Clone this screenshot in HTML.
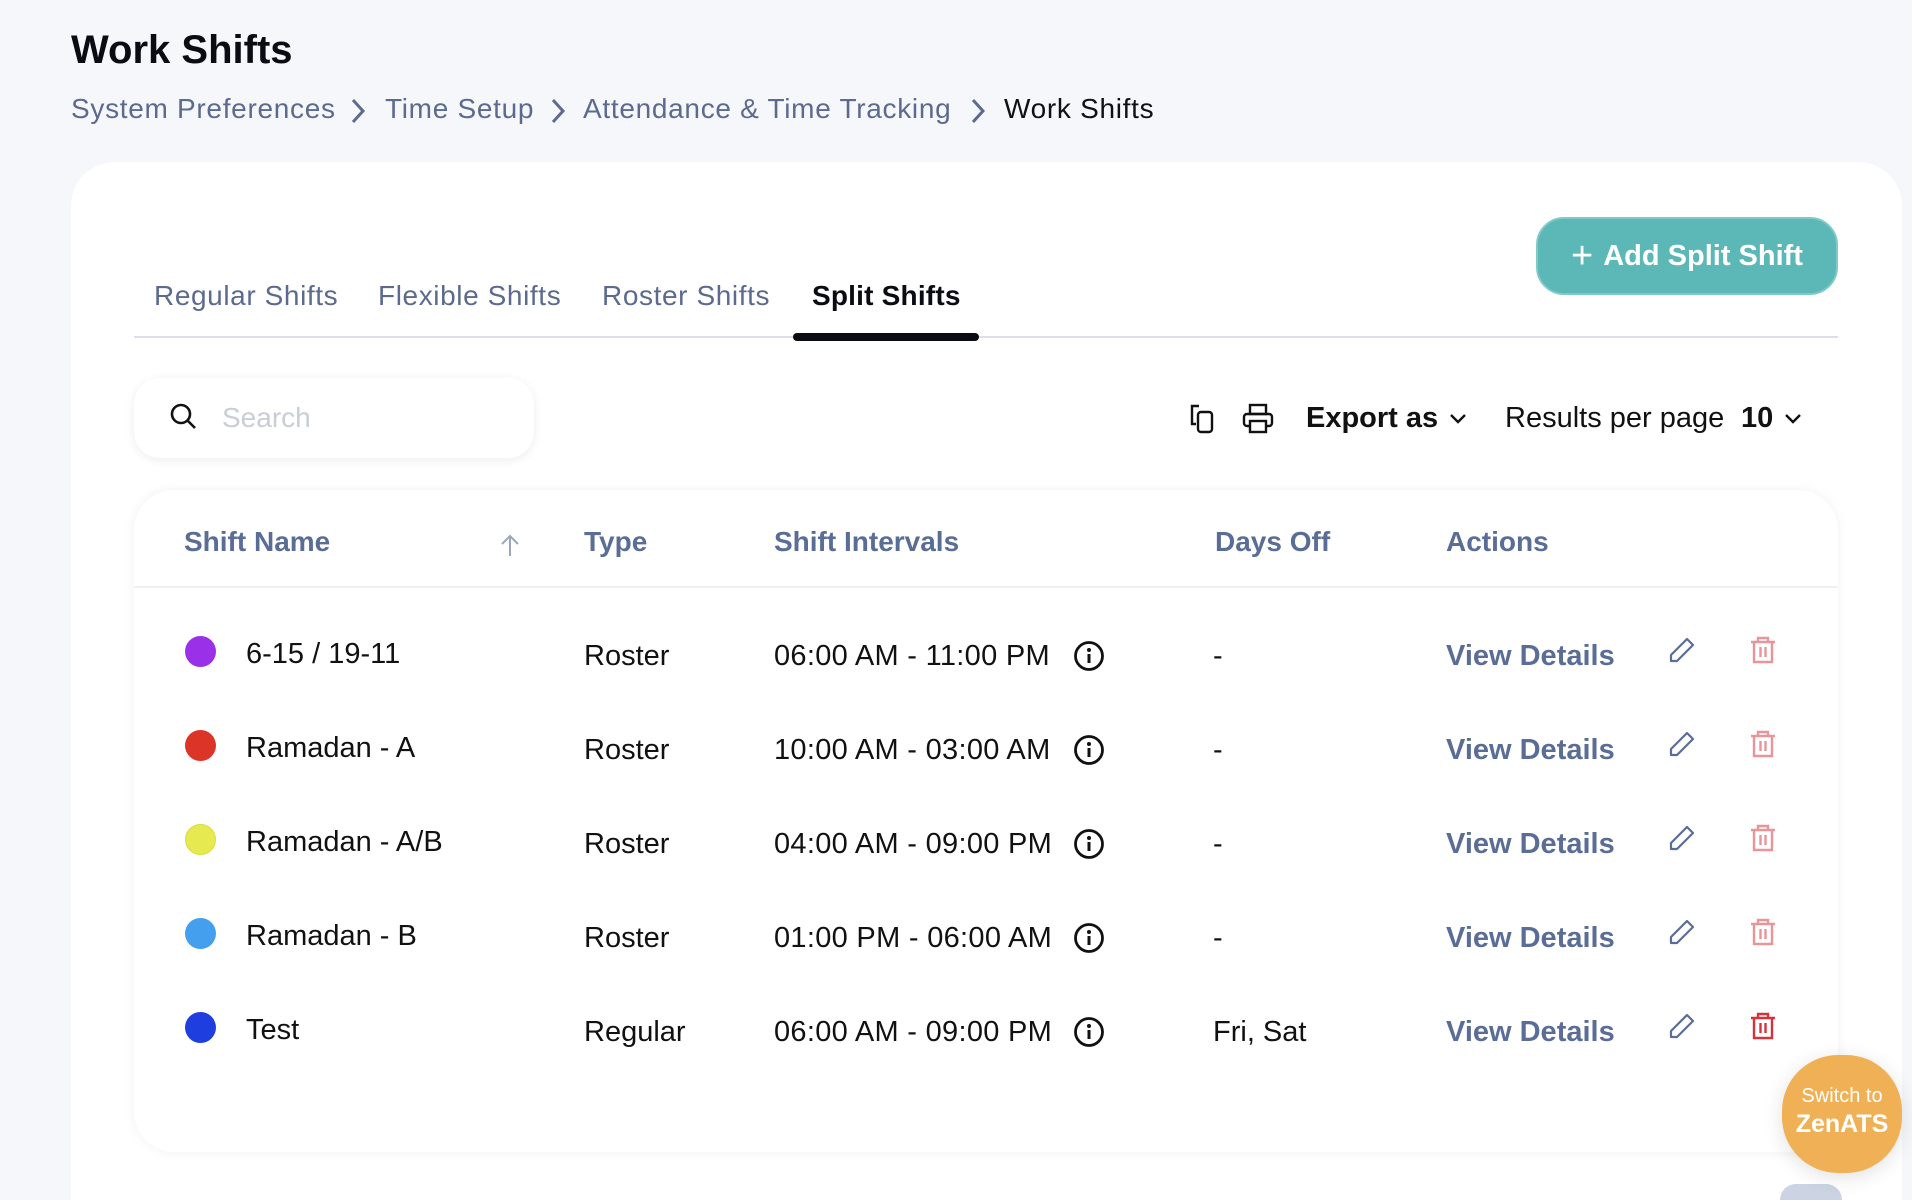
<!DOCTYPE html>
<html><head><meta charset="utf-8"><style>
*{box-sizing:border-box;margin:0;padding:0}
html,body{width:1912px;height:1200px;overflow:hidden}
body{background:#f6f7fb;font-family:"Liberation Sans",sans-serif;position:relative;color:#111}
.a{position:absolute;white-space:nowrap}
h1{position:absolute;left:71px;top:28px;font-size:40px;font-weight:700;color:#0b0b14}
.bc{top:93px;font-size:28px;color:#5b6a8e;letter-spacing:0.7px}
.card{position:absolute;left:71px;top:162px;width:1831px;height:1038px;background:#fff;border-radius:44px 44px 0 0}
.tab{top:280px;font-size:28px;color:#5b6a8e;letter-spacing:0.6px}
.btn{position:absolute;left:1536px;top:217px;width:302px;height:78px;border-radius:28px;background:#5bb8b7;color:#fff;font-weight:700;font-size:29px;display:flex;align-items:center;justify-content:center;gap:10px;border:2px solid #7fcac9}
.search{position:absolute;left:134px;top:378px;width:400px;height:80px;border-radius:26px;background:#fff;box-shadow:0 2px 10px rgba(20,30,60,.08)}
.tbl{position:absolute;left:134px;top:490px;width:1704px;height:662px;border-radius:40px;background:#fff;box-shadow:0 0 12px rgba(20,30,60,.06)}
.th{top:526px;font-size:28px;font-weight:700;color:#5a6d96}
.td{font-size:29px;color:#111}
.vd{font-size:29px;font-weight:700;color:#5a6d96}
.dot{position:absolute;width:31px;height:31px;border-radius:50%}
</style></head><body>
<h1>Work Shifts</h1>
<div class="a bc" style="left:71px">System Preferences</div>
<svg class="a" style="left:348px;top:96px" width="20" height="30"><path d="M5 4 L15 15 L5 26" stroke="#5b6a8e" stroke-width="3" fill="none"/></svg>
<div class="a bc" style="left:385px">Time Setup</div>
<svg class="a" style="left:548px;top:96px" width="20" height="30"><path d="M5 4 L15 15 L5 26" stroke="#5b6a8e" stroke-width="3" fill="none"/></svg>
<div class="a bc" style="left:583px">Attendance &amp; Time Tracking</div>
<svg class="a" style="left:968px;top:96px" width="20" height="30"><path d="M5 4 L15 15 L5 26" stroke="#5b6a8e" stroke-width="3" fill="none"/></svg>
<div class="a bc" style="left:1004px;color:#111">Work Shifts</div>

<div class="card"></div>
<div class="a tab" style="left:154px">Regular Shifts</div>
<div class="a tab" style="left:378px">Flexible Shifts</div>
<div class="a tab" style="left:602px">Roster Shifts</div>
<div class="a tab" style="left:812px;color:#0b0b14;font-weight:700;letter-spacing:0.2px">Split Shifts</div>
<div class="a" style="left:134px;top:336px;width:1704px;height:2px;background:#dcdfe9"></div>
<div class="a" style="left:793px;top:333px;width:186px;height:8px;border-radius:4px;background:#0b0b14"></div>
<div class="btn"><span style="font-size:38px;font-weight:400;line-height:1">+</span>Add Split Shift</div>

<div class="search"></div>
<svg class="a" style="left:169px;top:402px" width="30" height="30"><circle cx="12" cy="12" r="9" stroke="#111" stroke-width="2.6" fill="none"/><path d="M19 19 L26 26" stroke="#111" stroke-width="2.6"/></svg>
<div class="a" style="left:222px;top:402px;font-size:28px;color:#c8cdd8">Search</div>

<svg class="a" style="left:1188px;top:402px" width="32" height="34"><path d="M11 4 H4 V22 H8" stroke="#111" stroke-width="2.4" fill="none"/><rect x="10" y="10" width="14" height="20" rx="3" stroke="#111" stroke-width="2.4" fill="none"/></svg>
<svg class="a" style="left:1241px;top:402px" width="34" height="34"><rect x="9" y="3" width="16" height="9" stroke="#111" stroke-width="2.4" fill="none"/><rect x="3" y="12" width="28" height="12" rx="3" stroke="#111" stroke-width="2.4" fill="none"/><rect x="9" y="19" width="16" height="11" stroke="#111" stroke-width="2.4" fill="#fff"/></svg>
<div class="a" style="left:1306px;top:402px;font-size:29px;font-weight:700">Export as</div>
<svg class="a" style="left:1448px;top:411px" width="20" height="16"><path d="M3 4 L10 11 L17 4" stroke="#111" stroke-width="2.4" fill="none"/></svg>
<div class="a" style="left:1505px;top:402px;font-size:29px">Results per page</div>
<div class="a" style="left:1741px;top:402px;font-size:29px;font-weight:700">10</div>
<svg class="a" style="left:1783px;top:411px" width="20" height="16"><path d="M3 4 L10 11 L17 4" stroke="#111" stroke-width="2.4" fill="none"/></svg>

<div class="tbl"></div>
<div class="a" style="left:134px;top:586px;width:1704px;height:2px;background:#eef0f5"></div>
<div class="a th" style="left:184px">Shift Name</div>
<svg class="a" style="left:499px;top:532px" width="22" height="26"><path d="M11 24 V4 M3 12 L11 4 L19 12" stroke="#9aa5be" stroke-width="2" fill="none"/></svg>
<div class="a th" style="left:584px">Type</div>
<div class="a th" style="left:774px">Shift Intervals</div>
<div class="a th" style="left:1215px">Days Off</div>
<div class="a th" style="left:1446px">Actions</div>

<div class="dot" style="left:185px;top:636px;background:#9a30e8"></div>
<div class="a td" style="left:246px;top:638px">6-15 / 19-11</div>
<div class="a td" style="left:584px;top:640px">Roster</div>
<div class="a td" style="left:774px;top:640px;letter-spacing:0.3px">06:00 AM - 11:00 PM</div>
<div class="a td" style="left:1213px;top:640px">-</div>

<div class="dot" style="left:185px;top:730px;background:#dc3528"></div>
<div class="a td" style="left:246px;top:732px">Ramadan - A</div>
<div class="a td" style="left:584px;top:734px">Roster</div>
<div class="a td" style="left:774px;top:734px;letter-spacing:0.3px">10:00 AM - 03:00 AM</div>
<div class="a td" style="left:1213px;top:734px">-</div>

<div class="dot" style="left:185px;top:824px;background:#e6ea50;border:1px solid #d8dc40"></div>
<div class="a td" style="left:246px;top:826px">Ramadan - A/B</div>
<div class="a td" style="left:584px;top:828px">Roster</div>
<div class="a td" style="left:774px;top:828px;letter-spacing:0.3px">04:00 AM - 09:00 PM</div>
<div class="a td" style="left:1213px;top:828px">-</div>

<div class="dot" style="left:185px;top:918px;background:#44a0ef"></div>
<div class="a td" style="left:246px;top:920px">Ramadan - B</div>
<div class="a td" style="left:584px;top:922px">Roster</div>
<div class="a td" style="left:774px;top:922px;letter-spacing:0.3px">01:00 PM - 06:00 AM</div>
<div class="a td" style="left:1213px;top:922px">-</div>

<div class="dot" style="left:185px;top:1012px;background:#1f3ee0"></div>
<div class="a td" style="left:246px;top:1014px">Test</div>
<div class="a td" style="left:584px;top:1016px">Regular</div>
<div class="a td" style="left:774px;top:1016px;letter-spacing:0.3px">06:00 AM - 09:00 PM</div>
<div class="a td" style="left:1213px;top:1016px">Fri, Sat</div>

<svg width="0" height="0" style="position:absolute"><defs>
<g id="inf"><circle cx="16" cy="16" r="13.5" stroke="#111" stroke-width="2.8" fill="none"/><circle cx="16" cy="10" r="2" fill="#111"/><path d="M16 14 V23" stroke="#111" stroke-width="3"/></g>
<g id="ed"><path d="M5 27 L5 21 L21 5 L27 11 L11 27 Z" stroke="#5a6d96" stroke-width="2.2" fill="none" stroke-linejoin="round"/></g>
<g id="tr"><path d="M4 8 H28 M11 8 V4 H21 V8 M7 8 V28 H25 V8 M13.5 13 V23 M18.5 13 V23" stroke="currentColor" stroke-width="2.4" fill="none"/></g>
</defs></svg>

<svg class="a" style="left:1073px;top:640px" width="32" height="32"><use href="#inf"/></svg>
<svg class="a" style="left:1073px;top:734px" width="32" height="32"><use href="#inf"/></svg>
<svg class="a" style="left:1073px;top:828px" width="32" height="32"><use href="#inf"/></svg>
<svg class="a" style="left:1073px;top:922px" width="32" height="32"><use href="#inf"/></svg>
<svg class="a" style="left:1073px;top:1016px" width="32" height="32"><use href="#inf"/></svg>

<div class="a vd" style="left:1446px;top:640px">View Details</div>
<div class="a vd" style="left:1446px;top:734px">View Details</div>
<div class="a vd" style="left:1446px;top:828px">View Details</div>
<div class="a vd" style="left:1446px;top:922px">View Details</div>
<div class="a vd" style="left:1446px;top:1016px">View Details</div>

<svg class="a" style="left:1666px;top:634px" width="32" height="32"><use href="#ed"/></svg>
<svg class="a" style="left:1666px;top:728px" width="32" height="32"><use href="#ed"/></svg>
<svg class="a" style="left:1666px;top:822px" width="32" height="32"><use href="#ed"/></svg>
<svg class="a" style="left:1666px;top:916px" width="32" height="32"><use href="#ed"/></svg>
<svg class="a" style="left:1666px;top:1010px" width="32" height="32"><use href="#ed"/></svg>

<svg class="a" style="left:1747px;top:634px;color:#e8959a" width="32" height="32"><use href="#tr"/></svg>
<svg class="a" style="left:1747px;top:728px;color:#e8959a" width="32" height="32"><use href="#tr"/></svg>
<svg class="a" style="left:1747px;top:822px;color:#e8959a" width="32" height="32"><use href="#tr"/></svg>
<svg class="a" style="left:1747px;top:916px;color:#e8959a" width="32" height="32"><use href="#tr"/></svg>
<svg class="a" style="left:1747px;top:1010px;color:#d6323c" width="32" height="32"><use href="#tr"/></svg>

<div class="a" style="left:1780px;top:1184px;width:62px;height:16px;border-radius:16px 16px 0 0;background:#ccd3e2"></div>
<div class="a" style="left:1782px;top:1055px;width:120px;height:118px;border-radius:56px;background:#f0b055;color:#fff;text-align:center;padding-top:30px;box-shadow:0 4px 20px rgba(0,0,0,.12)">
<div style="font-size:20px">Switch to</div><div style="font-size:25px;font-weight:700;margin-top:2px">ZenATS</div></div>
</body></html>
